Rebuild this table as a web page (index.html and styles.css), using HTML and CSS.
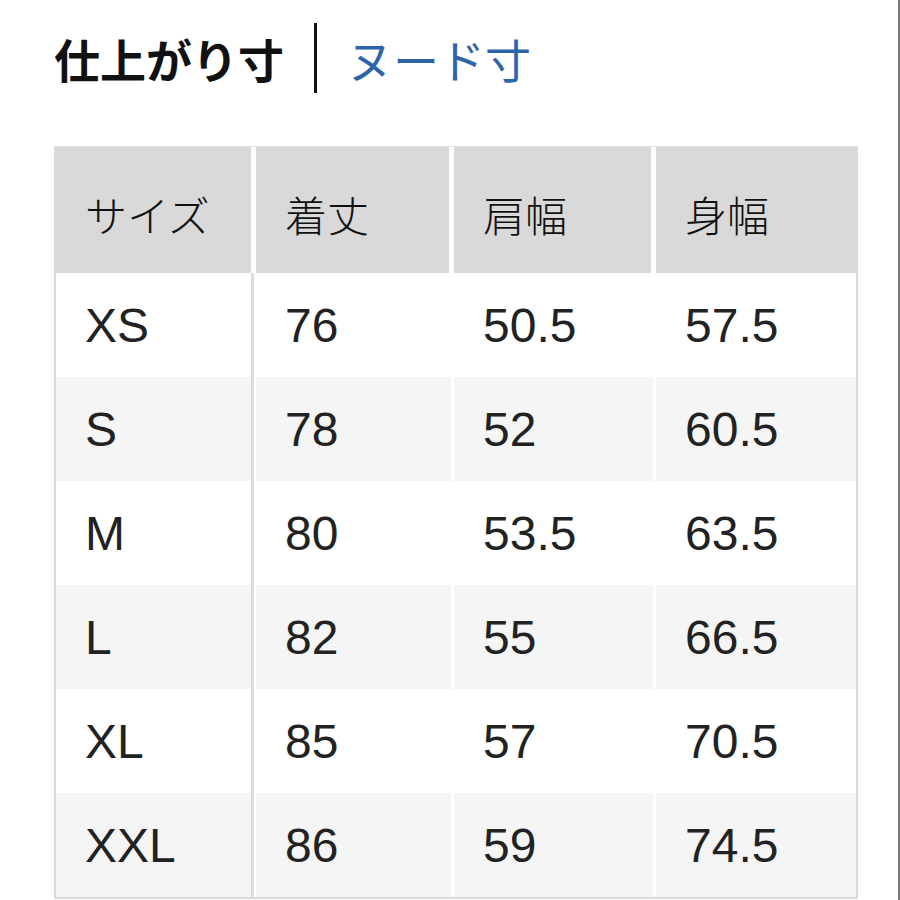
FILE: index.html
```html
<!DOCTYPE html>
<html lang="ja">
<head>
<meta charset="utf-8">
<link rel="stylesheet" href="styles.css">
</head>
<body>
<div class="page">
  <div class="tabs">
    <span class="tab tab-active">仕上がり寸</span>
    <span class="divider"></span>
    <span class="tab tab-link">ヌード寸</span>
  </div>
  <div class="size-table">
    <div class="cell head c1">サイズ</div>
    <div class="cell head c2">着丈</div>
    <div class="cell head c3">肩幅</div>
    <div class="cell head c4">身幅</div>

    <div class="cell c1">XS</div><div class="cell c2">76</div><div class="cell c3">50.5</div><div class="cell c4">57.5</div>
    <div class="cell c1 alt">S</div><div class="cell c2 alt">78</div><div class="cell c3 alt">52</div><div class="cell c4 alt">60.5</div>
    <div class="cell c1">M</div><div class="cell c2">80</div><div class="cell c3">53.5</div><div class="cell c4">63.5</div>
    <div class="cell c1 alt">L</div><div class="cell c2 alt">82</div><div class="cell c3 alt">55</div><div class="cell c4 alt">66.5</div>
    <div class="cell c1">XL</div><div class="cell c2">85</div><div class="cell c3">57</div><div class="cell c4">70.5</div>
    <div class="cell c1 alt">XXL</div><div class="cell c2 alt">86</div><div class="cell c3 alt">59</div><div class="cell c4 alt">74.5</div>
  </div>
</div>
</body>
</html>
```
FILE: styles.css
```css
html, body {
  margin: 0;
  padding: 0;
  background: #fff;
}

.page {
  box-sizing: border-box;
  width: 900px;
  height: 900px;
  overflow: hidden;
  border-right: 2px solid #7a7a7a;
  padding-left: 54px;
}

.tabs {
  display: flex;
  align-items: center;
  height: 70px;
  margin-top: 23px;
}

.tab {
  font-family: "Noto Sans CJK JP", "Noto Sans", sans-serif;
  font-size: 46px;
  line-height: 1;
}

.tab-active {
  font-weight: 700;
  color: #111;
}

.tab-link {
  font-weight: 400;
  color: #2e64a9;
}

.divider {
  width: 3px;
  height: 70px;
  background: #111;
  margin: 0 30px 0 30px;
}

.size-table {
  margin-top: 53px;
  width: 804px;
  box-sizing: border-box;
  display: grid;
  grid-template-columns: 198px 198px 202px 202px;
  grid-template-rows: 126px repeat(6, 104px);
  border-top: 1px solid #e2e2e2;
  border-left: 2px solid #dadada;
  border-right: 2px solid #dadada;
  border-bottom: 2px solid #dadada;
}

.cell {
  box-sizing: border-box;
  display: flex;
  align-items: center;
  padding-left: 29px;
  font-family: "Liberation Sans", Arial, sans-serif;
  font-size: 48px;
  color: #222;
  background: #fff;
}

.cell.alt {
  background: #f5f5f5;
}

.cell.head {
  background: #d9d9d9;
  font-family: "Noto Sans CJK JP", "Noto Sans", sans-serif;
  font-weight: 300;
  font-size: 42px;
  padding-top: 6px;
  color: #111;
}

.head.c1 { border-right: 3px solid #fff; }
.head.c2, .head.c3 { border-left: 2px solid #fff; border-right: 3px solid #fff; }
.head.c4 { border-left: 2px solid #fff; }

.cell.c1:not(.head) { border-right: 3px solid #dcdcdc; }
.cell.c2:not(.head), .cell.c3:not(.head) { border-left: 2px solid #fff; border-right: 1px solid #fff; }
.cell.c4:not(.head) { border-left: 2px solid #fff; }
```
